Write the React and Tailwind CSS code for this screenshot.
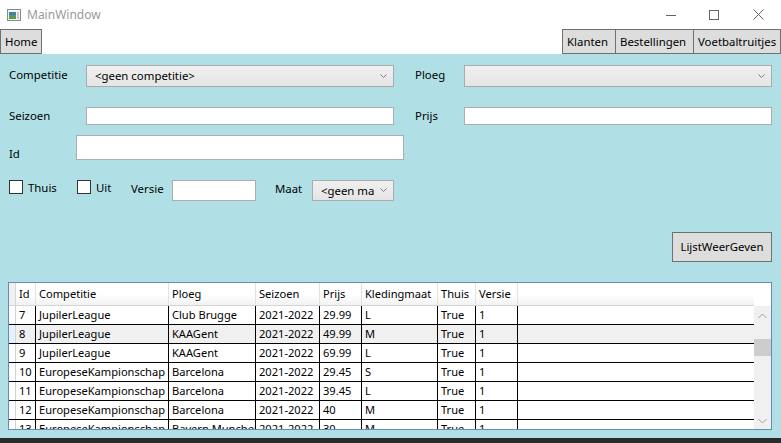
import React from "react";

const rows = [
  ["7", "JupilerLeague", "Club Brugge", "2021-2022", "29.99", "L", "True", "1"],
  ["8", "JupilerLeague", "KAAGent", "2021-2022", "49.99", "M", "True", "1"],
  ["9", "JupilerLeague", "KAAGent", "2021-2022", "69.99", "L", "True", "1"],
  ["10", "EuropeseKampionschap", "Barcelona", "2021-2022", "29.45", "S", "True", "1"],
  ["11", "EuropeseKampionschap", "Barcelona", "2021-2022", "39.45", "L", "True", "1"],
  ["12", "EuropeseKampionschap", "Barcelona", "2021-2022", "40", "M", "True", "1"],
  ["13", "EuropeseKampionschap", "Bayern Munchen", "2021-2022", "30", "M", "True", "1"],
];

const cols = [
  { name: "Id", w: "w-[20px]" },
  { name: "Competitie", w: "w-[133px]" },
  { name: "Ploeg", w: "w-[87px]" },
  { name: "Seizoen", w: "w-[64px]" },
  { name: "Prijs", w: "w-[42px]" },
  { name: "Kledingmaat", w: "w-[76px]" },
  { name: "Thuis", w: "w-[38px]" },
  { name: "Versie", w: "w-[42px]" },
];

const Chevron = ({ className }) => (
  <svg className={className} width="7" height="5" viewBox="0 0 7 5">
    <path d="M0.5 0.5 L3.5 3.5 L6.5 0.5" fill="none" stroke="#7a7a7a" strokeWidth="1" />
  </svg>
);

const Combo = ({ text, w }) => (
  <div className={`${w} h-full flex items-center justify-between border border-[#acacac] bg-gradient-to-b from-[#f0f0f0] to-[#e5e5e5] pl-[8px] pr-[6px]`}>
    <span className="whitespace-nowrap overflow-hidden">{text}</span>
    <Chevron className="shrink-0" />
  </div>
);

const TextBox = ({ w }) => (
  <div className={`${w} h-full border border-[#abadb3] bg-white`}></div>
);

const CheckBox = () => (
  <div className="w-[14px] h-[14px] shrink-0 border border-[#333333] bg-white"></div>
);

const WinButton = ({ children, className = "" }) => (
  <div className={`h-full flex items-center px-[4px] bg-[#dddddd] border border-[#707070] whitespace-nowrap ${className}`}>
    {children}
  </div>
);

export default function App() {
  return (
    <div className="w-[781px] h-[443px] flex flex-col bg-white text-[11.4px] text-black overflow-hidden font-['Noto_Sans',sans-serif]">
      {/* Title bar */}
      <div className="h-[29px] flex items-center shrink-0">
        <svg className="ml-[7px]" width="14" height="12" viewBox="0 0 14 12">
          <rect x="0.5" y="0.5" width="13" height="11" fill="#f4f4f4" stroke="#8a8a8a" />
          <rect x="2" y="3" width="7" height="7" fill="#3b7fb8" />
          <rect x="2" y="6" width="7" height="4" fill="#5a9a4a" />
          <rect x="10" y="3" width="2" height="7" fill="#c8c8c8" />
        </svg>
        <span className="ml-[6px] text-[#9a9a9a] text-[12px]">MainWindow</span>
        <div className="ml-auto flex items-center h-full">
          <svg className="mr-[33px]" width="10" height="10" viewBox="0 0 10 10">
            <path d="M0 5.5 H10" stroke="#666" strokeWidth="1" />
          </svg>
          <svg className="mr-[34px]" width="10" height="10" viewBox="0 0 10 10">
            <rect x="0.5" y="0.5" width="9" height="9" fill="none" stroke="#666" />
          </svg>
          <svg className="mr-[17px]" width="11" height="11" viewBox="0 0 11 11">
            <path d="M0.5 0.5 L10.5 10.5 M10.5 0.5 L0.5 10.5" stroke="#666" strokeWidth="1" />
          </svg>
        </div>
      </div>

      {/* Tab buttons */}
      <div className="h-[25px] flex shrink-0">
        <WinButton className="w-[42px]">Home</WinButton>
        <div className="ml-auto flex h-full">
          <WinButton className="w-[54px]">Klanten</WinButton>
          <WinButton className="w-[79px] -ml-px">Bestellingen</WinButton>
          <WinButton className="w-[88px] -ml-px">Voetbaltruitjes</WinButton>
        </div>
      </div>

      {/* Form area */}
      <div className="flex-1 bg-[#b0e0e6] flex flex-col">
        <div className="h-[22px] mt-[11px] flex items-center">
          <span className="w-[86px] pl-[9px] -mt-[3px]">Competitie</span>
          <Combo text="<geen competitie>" w="w-[308px]" />
          <span className="w-[70px] pl-[21px] -mt-[3px]">Ploeg</span>
          <Combo text="" w="w-[308px]" />
        </div>

        <div className="h-[18px] mt-[20px] flex items-center">
          <span className="w-[86px] pl-[9px]">Seizoen</span>
          <TextBox w="w-[308px]" />
          <span className="w-[70px] pl-[21px]">Prijs</span>
          <TextBox w="w-[308px]" />
        </div>

        <div className="h-[25px] mt-[10px] flex items-center">
          <span className="w-[76px] pl-[9px] mt-[12px]">Id</span>
          <TextBox w="w-[328px]" />
        </div>

        <div className="h-[21px] mt-[20px] flex items-center">
          <div className="ml-[9px] w-[68px] -mt-[6px] flex items-center">
            <CheckBox />
            <span className="ml-[5px]">Thuis</span>
          </div>
          <div className="w-[54px] -mt-[6px] flex items-center">
            <CheckBox />
            <span className="ml-[5px]">Uit</span>
          </div>
          <span className="w-[41px] -mt-[4px]">Versie</span>
          <div className="h-full">
            <TextBox w="w-[84px]" />
          </div>
          <span className="ml-[19px] w-[37px] -mt-[4px]">Maat</span>
          <div className="h-full">
            <Combo text="<geen ma" w="w-[82px]" />
          </div>
        </div>

        <div className="h-[30px] mt-[31px] flex">
          <div className="ml-auto mr-[9px] w-[100px] h-full flex items-center justify-center bg-[#dddddd] border border-[#707070]">
            LijstWeerGeven
          </div>
        </div>

        {/* DataGrid */}
        <div className="mt-[20px] ml-[8px] w-[764px] h-[148px] border border-[#688caf] bg-white flex overflow-hidden text-[11.1px]">
          <div className="flex-1 flex flex-col overflow-hidden">
            <div className="h-[23px] shrink-0 flex bg-gradient-to-b from-white from-50% to-[#f2f2f2] border-b border-[#d5d5d5]">
              <div className="w-[7px] shrink-0 bg-[#f0f0f0] border-r border-[#d5d5d5]"></div>
              {cols.map((c) => (
                <div key={c.name} className={`${c.w} shrink-0 pl-[3px] flex items-center border-r border-[#e2e2e2] whitespace-nowrap`}>
                  {c.name}
                </div>
              ))}
              <div className="flex-1"></div>
            </div>
            {rows.map((r, i) => (
              <div key={r[0]} className={`h-[19px] shrink-0 flex border-b border-black ${i === 1 ? "bg-[#f0f0f0]" : "bg-white"}`}>
                <div className={`w-[7px] shrink-0 border-r border-[#c8d4e2] ${i === 1 ? "bg-[#e8f1fb]" : "bg-white"}`}></div>
                {r.map((v, j) => (
                  <div key={j} className={`${cols[j].w} shrink-0 pl-[3px] pt-px flex items-center border-r border-black whitespace-nowrap overflow-hidden`}>
                    {v}
                  </div>
                ))}
                <div className="flex-1"></div>
              </div>
            ))}
          </div>
          {/* Scrollbar */}
          <div className="w-[17px] shrink-0 bg-[#f0f0f0] flex flex-col items-center">
            <div className="h-[23px] w-full bg-white"></div>
            <svg className="mt-[7px]" width="9" height="6" viewBox="0 0 9 6">
              <path d="M0.5 5 L4.5 1 L8.5 5" fill="none" stroke="#a0a0a0" />
            </svg>
            <div className="mt-[20px] w-full h-[17px] bg-[#cdcdcd]"></div>
            <svg className="mt-auto mb-[5px]" width="9" height="6" viewBox="0 0 9 6">
              <path d="M0.5 1 L4.5 5 L8.5 1" fill="none" stroke="#a0a0a0" />
            </svg>
          </div>
        </div>
      </div>

      {/* Bottom strip */}
      <div className="h-[5px] shrink-0 bg-[#2b2b2b]"></div>
    </div>
  );
}
